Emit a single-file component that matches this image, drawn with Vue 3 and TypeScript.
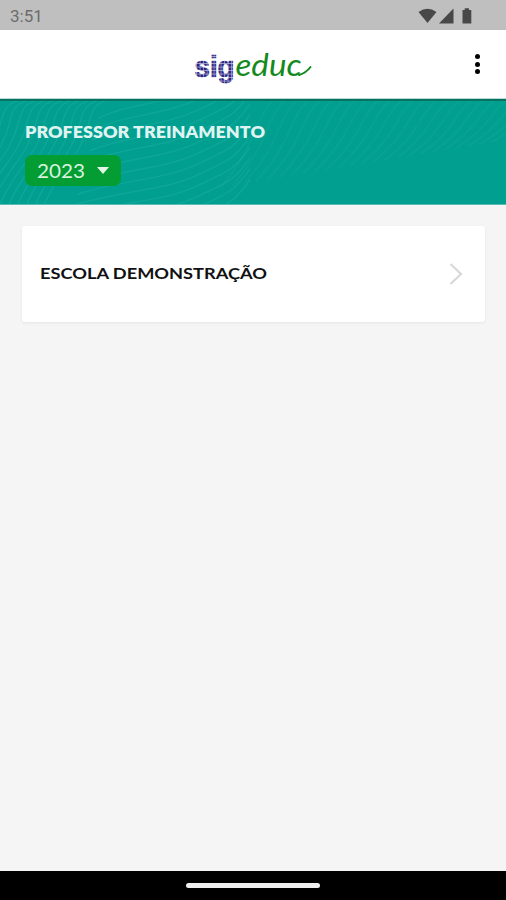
<script setup lang="ts">
import { ref } from 'vue'

const time = '3:51'
const userName = 'PROFESSOR TREINAMENTO'
const year = ref('2023')
const schools = ref(['ESCOLA DEMONSTRAÇÃO'])

// Contour lines of the banner texture
const left = Array.from({ length: 11 }, (_, i) => {
  const x = i * 9
  return `M${x - 50} 106 C${x - 35} 70 ${x - 12} 55 ${x - 5} 25 S${x + 10} 5 ${x + 20} -5`
})
const middle = Array.from({ length: 13 }, (_, i) => {
  const y = i * 11 - 6
  return `M${95 - i * 3} ${y + 24} C125 ${y + 8} 160 ${y + 10} 195 ${y - 6} S235 ${y - 24} 250 ${y - 46}`
})
const right = Array.from({ length: 24 }, (_, i) => {
  const x = 255 + i * 12
  const end = 88 - i * 2
  return `M${x - 35} ${end} Q${x - 12} ${end * 0.7} ${x} ${end * 0.35} T${x + 28} -8`
})
</script>

<template>
  <div class="screen">
    <div class="status">
      <span class="time">{{ time }}</span>
      <svg class="indicators" width="56" height="18" viewBox="0 0 56 18" fill="#484848">
        <path d="M0.500 5 Q9.500-1.600 18.500 5 L9.500 16Z" />
        <path d="M21 16.500 L35.500 16.500 L35.500 1.500Z" />
        <path d="M44.500 3h2.200V1.200h4.300V3h2.300v13.600h-8.800z" />
      </svg>
    </div>

    <header class="toolbar">
      <svg class="logo" width="126" height="42" viewBox="0 0 126 42" role="img" aria-label="sigeduc">
        <defs>
          <pattern id="dots" width="3.500" height="3.500" patternUnits="userSpaceOnUse">
            <rect width="3.500" height="3.500" fill="#bdbbe0" />
            <rect width="2.900" height="2.800" fill="#2c277f" />
          </pattern>
        </defs>
        <text class="sig" x="4.500" y="34" textLength="40" lengthAdjust="spacingAndGlyphs">sig</text>
        <text class="educ" x="45.500" y="33" textLength="66" lengthAdjust="spacingAndGlyphs">educ</text>
        <path class="swash" d="M109 32 Q116 30 120.500 24" />
      </svg>
      <button class="more" aria-label="Menu"><i></i><i></i><i></i></button>
    </header>

    <section class="banner">
      <svg class="texture" viewBox="0 0 506 106" fill="none" aria-hidden="true">
        <g class="strong"><path v-for="d in left" :key="d" :d="d" /></g>
        <g class="strong"><path v-for="d in middle" :key="d" :d="d" /></g>
        <g class="faint"><path v-for="d in right" :key="d" :d="d" /></g>
      </svg>
      <svg class="name" width="242" height="20"><text x="0" y="14.500" textLength="240" lengthAdjust="spacingAndGlyphs">{{ userName }}</text></svg>
      <button class="year">
        <svg width="50" height="26"><text x="0" y="20" textLength="48" lengthAdjust="spacingAndGlyphs">{{ year }}</text></svg>
        <span class="caret"></span>
      </button>
    </section>

    <main class="list">
      <article v-for="school in schools" :key="school" class="card">
        <svg class="school" width="230" height="26"><text x="0" y="18" textLength="227" lengthAdjust="spacingAndGlyphs">{{ school }}</text></svg>
        <svg width="14" height="24" viewBox="0 0 14 24"><path class="chevron" d="M1.500 2 L12 12 L1.500 22" /></svg>
      </article>
    </main>

    <footer class="nav"><span></span></footer>
  </div>
</template>

<style>
body { background: #f5f5f5; }
</style>

<style scoped>
.screen {
  width: 506px;
  height: 900px;
  display: flex;
  flex-direction: column;
  overflow: hidden;
  background: #f5f5f5;
  font-family: Lato, sans-serif;
}
.screen * { box-sizing: border-box; }
svg { display: block; }
button { border: 0; padding: 0; margin: 0; }
.status {
  height: 30px;
  flex: none;
  display: flex;
  justify-content: space-between;
  align-items: center;
  padding: 1px 32px 0 10px;
  background: #bfbfbf;
}
.time { font: 17px Roboto, sans-serif; color: #6c6c6c; }
.toolbar {
  height: 69px;
  flex: none;
  display: grid;
  grid-template-columns: 1fr 126px 1fr;
  align-items: center;
  background: #fff;
  border-bottom: 1px solid #b5d9d5;
}
.logo { grid-column: 2; overflow: visible; }
.sig { font: bold 30px "Liberation Sans", sans-serif; fill: url(#dots); stroke: url(#dots); stroke-width: .6; }
.educ { font: italic 30px Lato, sans-serif; fill: #148a1c; }
.swash { fill: none; stroke: #148a1c; stroke-width: 2; stroke-linecap: round; }
.more {
  justify-self: end;
  width: 5px;
  margin-right: 26px;
  display: flex;
  flex-direction: column;
  gap: 2.500px;
  background: none;
}
.more i { width: 5px; height: 5px; border-radius: 50%; background: #000; }
.banner {
  height: 106px;
  flex: none;
  display: grid;
  grid-template-columns: 1fr;
  align-content: start;
  padding: 22px 25px 0;
  background: #009f90;
  border-top: 2px solid #087263;
  border-bottom: 1px solid #5bbcb1;
}
.texture { grid-area: 1 / 1; width: 506px; height: 104px; margin: -22px -25px -84px; }
.strong { stroke: #48c3b7; stroke-opacity: .2; stroke-width: 1.500; }
.faint { stroke: #40bdaf; stroke-opacity: .12; stroke-width: 2; }
.name { grid-area: 1 / 1; overflow: visible; }
.name text { font: 800 17px Lato, sans-serif; fill: #dff3f0; }
.year {
  grid-area: 2 / 1;
  width: 96px;
  height: 31px;
  margin-top: 12px;
  padding: 0 12px;
  display: flex;
  align-items: center;
  justify-content: space-between;
  border-radius: 7px;
  background: #049d34;
}
.year text { font: 20px Lato, sans-serif; fill: #d9f3df; }
.year svg { flex: none; }
.caret { border: 6.500px solid transparent; border-top: 7px solid #e3f6e8; border-bottom: 0; }
.list { flex: 1; padding: 21px 21px 0 22px; }
.card {
  height: 96px;
  display: flex;
  align-items: center;
  justify-content: space-between;
  padding: 0 22px 0 18px;
  border-radius: 3px;
  background: #fff;
  box-shadow: 0 1px 3px rgba(0, 0, 0, .07);
}
.school text { font: bold 16px Lato, sans-serif; fill: #111; }
.chevron { fill: none; stroke: #d8d8d8; stroke-width: 2.200; }
.nav {
  height: 29px;
  flex: none;
  display: flex;
  justify-content: center;
  align-items: center;
  background: #000;
}
.nav span { width: 134px; height: 5px; border-radius: 3px; background: #eee; }
</style>
